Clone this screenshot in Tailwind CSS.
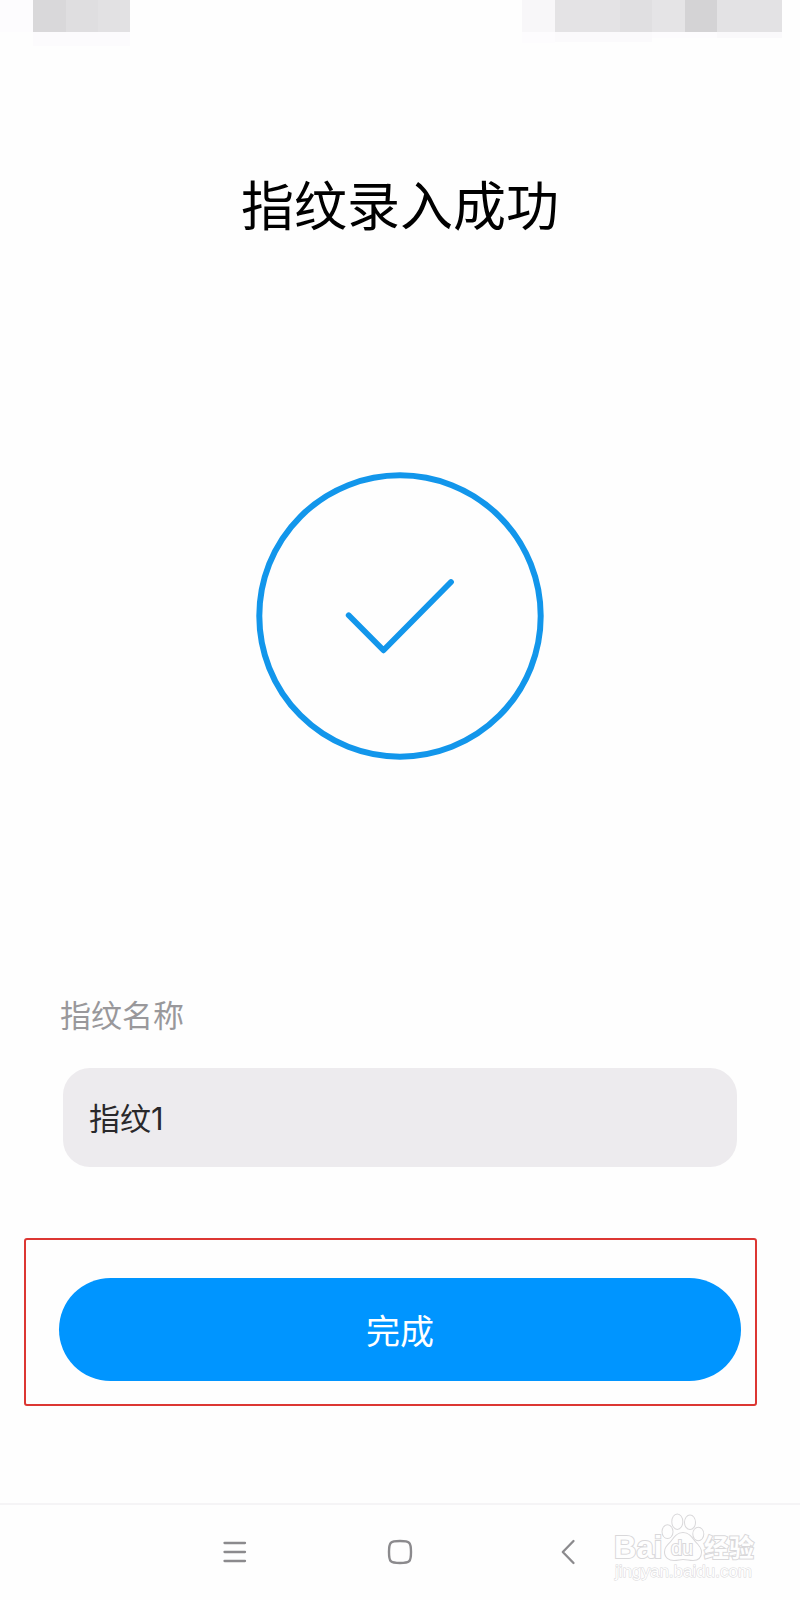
<!DOCTYPE html>
<html lang="zh-CN">
<head>
    <meta charset="UTF-8">
    <meta name="viewport" content="width=device-width, initial-scale=1.0">
    <title>指纹录入成功</title>
    <script src="https://cdn.jsdelivr.net/npm/@tailwindcss/browser@4"></script>
</head>
<body class="min-h-screen flex flex-col bg-[#fefefe] text-black font-['Noto_Sans_CJK_SC',sans-serif]">

<!-- 状态栏(已打码) -->
<header class="flex items-start justify-between h-12 pr-[18px]" aria-hidden="true">
    <div class="flex">
        <div class="w-[33px] h-8 bg-[#fdfcfe]"></div>
        <div class="border-b-[14px] border-[#fcfbfd] flex">
            <div class="w-[33px] h-8 bg-[#d9d8da]"></div>
            <div class="w-8 h-8 bg-[#dfdee0]"></div>
            <div class="w-8 h-8 bg-[#e2e1e3]"></div>
        </div>
    </div>
    <div class="flex items-start">
        <div class="w-[33px] h-[43px] bg-[#fdfcfe] border-t-[32px] border-[#f8f7f9]"></div>
        <div class="flex border-b-[10px] border-[#fbfafc]">
            <div class="w-[65px] h-8 bg-[#e4e3e5]"></div>
            <div class="w-8 h-8 bg-[#e0dfe1]"></div>
        </div>
        <div class="flex border-b-[6px] border-[#fdfcfe]">
            <div class="w-[33px] h-8 bg-[#e5e4e6]"></div>
            <div class="w-8 h-8 bg-[#d4d3d5]"></div>
        </div>
        <div class="w-[65px] h-[38px] bg-[#faf9fb] border-t-[32px] border-[#e3e2e4]"></div>
    </div>
</header>

<main class="flex-1 flex flex-col">
    <h1 class="mt-[115px] text-[53px] leading-[80px] text-center">指纹录入成功</h1>

    <svg class="mt-[229px] mx-auto w-[288px] h-[288px]" viewBox="0 0 288 288" fill="none" stroke="#1296eb"
         stroke-linecap="round" stroke-linejoin="round">
        <circle cx="144" cy="144" r="140.7" stroke-width="6"/>
        <path d="M92.7 143.3L127.5 178.3L195 110" stroke-width="5.8"/>
    </svg>

    <form class="mt-[230px]" onsubmit="return false">
        <div class="px-[60px]">
            <label for="fingerName" class="block text-[31px] leading-[48px] text-[#99989b]">指纹名称</label>
        </div>
        <div class="mt-[30px] px-[63px]">
            <input type="text" id="fingerName" value="指纹1"
                   class="block w-full h-[99px] px-[26px] pb-[2px] rounded-[27px] bg-[#edebee] font-[Inter,'Noto_Sans_CJK_SC',sans-serif] text-[31px] text-[#29282b] focus:outline-none">
        </div>
        <!-- 红框标注 -->
        <div class="mt-[71px] ml-6 mr-[43px] pl-[33px] pr-[14px] pt-[38px] pb-[23px] border-2 border-[#dc3733] rounded-[3px]">
            <button type="submit" class="block w-full h-[103px] rounded-full bg-[#0095ff] text-white text-[34px]">完成</button>
        </div>
    </form>
</main>

<!-- 底部导航键 -->
<nav class="relative flex items-center justify-center gap-[118px] h-[97px] pb-[2px] border-t-2 border-[#f5f4f6] text-[#8b8a8d]">
    <button type="button" aria-label="菜单" class="w-12 h-12">
        <svg class="size-12" viewBox="0 0 48 48" fill="none" stroke="currentColor" stroke-width="2.3" stroke-linecap="round">
            <path d="M14.5 15H35M14.5 24H35M14.5 33H35"/>
        </svg>
    </button>
    <button type="button" aria-label="主页" class="w-12 h-12">
        <svg class="size-12" viewBox="0 0 48 48" fill="none" stroke="currentColor" stroke-width="2.4">
            <path d="M24 13C33.8 13 35 14.2 35 24S33.8 35 24 35S13 33.8 13 24S14.2 13 24 13Z"/>
        </svg>
    </button>
    <button type="button" aria-label="返回" class="w-12 h-12">
        <svg class="size-12" viewBox="0 0 48 48" fill="none" stroke="currentColor" stroke-width="2.3" stroke-linecap="round" stroke-linejoin="round">
            <path d="M31.5 13L20.8 24L31.5 35"/>
        </svg>
    </button>

    <!-- 水印 -->
    <svg class="absolute right-10 top-1 w-[150px] h-[80px] font-['Liberation_Sans',sans-serif]" viewBox="0 0 150 80"
         fill="#fefefe" stroke="#d9d8da" stroke-width="2" paint-order="stroke">
        <text x="4" y="49" font-size="31" font-weight="bold">Bai</text>
        <ellipse cx="57.5" cy="22.7" rx="5" ry="6.4"/>
        <ellipse cx="67.3" cy="12.7" rx="5" ry="7.2"/>
        <ellipse cx="80" cy="13.3" rx="5" ry="6.8"/>
        <ellipse cx="88.3" cy="25" rx="5" ry="6.2"/>
        <path d="M73 24C67 24 64 29 61 33C57 37 55 39 55 43C55 48 59 51 64 51C68 51 70 50 73 50C77 50 79 51 83 51C88 51 91 48 91 43C91 39 88 36 85 33C82 29 79 24 73 24Z"/>
        <text x="61" y="46" font-size="20">du</text>
        <text x="94" y="48" font-size="25" font-weight="bold" class="font-['Noto_Sans_CJK_SC',sans-serif]">经验</text>
        <text x="5" y="68" font-size="17" stroke-width="1">jingyan.baidu.com</text>
    </svg>
</nav>

</body>
</html>
